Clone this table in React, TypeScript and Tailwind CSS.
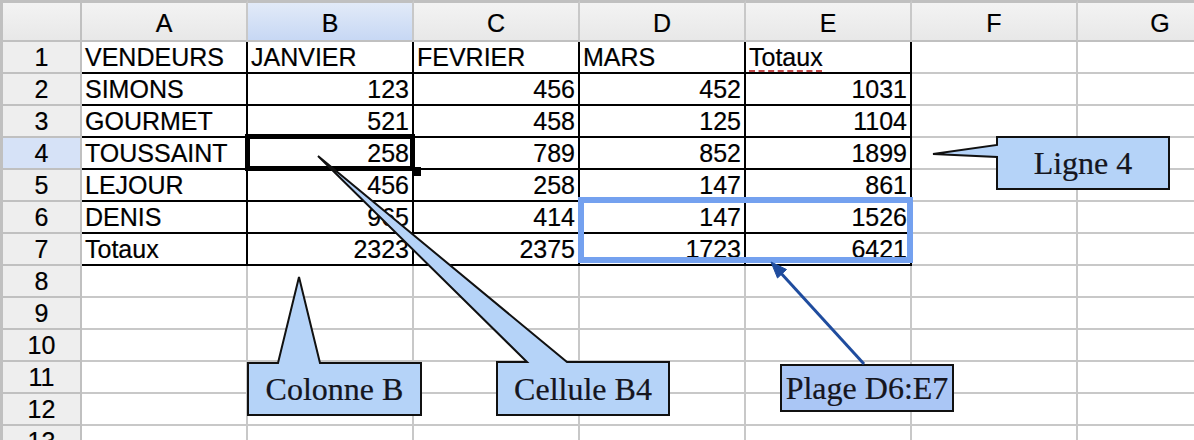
import React from 'react';

const COLS = ['A', 'B', 'C', 'D', 'E', 'F', 'G'];

type Cell = { v: string; num?: boolean; spell?: boolean };

const DATA: Cell[][] = [
  [{ v: 'VENDEURS' }, { v: 'JANVIER' }, { v: 'FEVRIER' }, { v: 'MARS' }, { v: 'Totaux', spell: true }],
  [{ v: 'SIMONS' }, { v: '123', num: true }, { v: '456', num: true }, { v: '452', num: true }, { v: '1031', num: true }],
  [{ v: 'GOURMET' }, { v: '521', num: true }, { v: '458', num: true }, { v: '125', num: true }, { v: '1104', num: true }],
  [{ v: 'TOUSSAINT' }, { v: '258', num: true }, { v: '789', num: true }, { v: '852', num: true }, { v: '1899', num: true }],
  [{ v: 'LEJOUR' }, { v: '456', num: true }, { v: '258', num: true }, { v: '147', num: true }, { v: '861', num: true }],
  [{ v: 'DENIS' }, { v: '965', num: true }, { v: '414', num: true }, { v: '147', num: true }, { v: '1526', num: true }],
  [{ v: 'Totaux' }, { v: '2323', num: true }, { v: '2375', num: true }, { v: '1723', num: true }, { v: '6421', num: true }],
];

const ROWS = Array.from({ length: 13 }, (_, i) => i + 1);

function DataCell({ row, col }: { row: number; col: number }) {
  const inTable = row <= 7 && col <= 4;
  const cell = inTable ? DATA[row - 1][col] : undefined;
  return (
    <div
      className={
        inTable
          ? 'w-[166px] h-[32px] shrink-0 border-r-2 border-b-2 border-black px-[3px] leading-[30px] whitespace-nowrap overflow-hidden'
          : 'w-[166px] h-[32px] shrink-0 border-r-2 border-b-2 border-[#c8c8c8] px-[3px] leading-[30px] whitespace-nowrap overflow-hidden'
      }
    >
      {cell ? (
        <div className={cell.num ? 'text-right' : 'text-left'}>
          {cell.spell ? (
            <span className="underline decoration-dashed decoration-[#c04848] decoration-2 underline-offset-[4px]">
              {cell.v}
            </span>
          ) : (
            cell.v
          )}
        </div>
      ) : null}
    </div>
  );
}

const SERIF = "font-['Liberation_Serif','Times_New_Roman',serif]";

export default function App() {
  return (
    <div className="relative w-[1194px] h-[440px] overflow-hidden bg-white text-black font-['Liberation_Sans',Arial,sans-serif] text-[25px] [-webkit-text-stroke:0.2px_#000]">
      {/* column header row */}
      <div className="flex h-[42px]">
        <div className="w-[82px] h-[42px] shrink-0 border-t-[3px] border-l-[3px] border-r-2 border-b-2 border-[#c0c0c0] bg-linear-to-b from-[#f3f3f3] to-[#e8e8e8]" />
        {COLS.map((c) => (
          <div
            key={c}
            className={
              c === 'B'
                ? 'w-[166px] h-[42px] shrink-0 border-t-[3px] border-r-2 border-b-2 border-t-[#c0c0c0] border-r-[#c8c8c8] border-b-[#c0c0c0] bg-linear-to-b from-[#e2eaf8] to-[#c7d8f4] flex items-center justify-center pt-[3px] leading-[30px]'
                : 'w-[166px] h-[42px] shrink-0 border-t-[3px] border-r-2 border-b-2 border-t-[#c0c0c0] border-r-[#c8c8c8] border-b-[#c0c0c0] bg-linear-to-b from-[#f3f3f3] to-[#e8e8e8] flex items-center justify-center pt-[3px] leading-[30px]'
            }
          >
            {c}
          </div>
        ))}
      </div>

      {/* data rows */}
      {ROWS.map((r) => (
        <div key={r} className="flex h-[32px]">
          <div
            className={
              r === 4
                ? 'w-[82px] h-[32px] shrink-0 border-l-[3px] border-r-2 border-b-2 border-[#c0c0c0] bg-[#d6e2f7] text-center leading-[30px]'
                : 'w-[82px] h-[32px] shrink-0 border-l-[3px] border-r-2 border-b-2 border-[#c0c0c0] bg-[#eeeeee] text-center leading-[30px]'
            }
          >
            {r}
          </div>
          {COLS.map((c, ci) => (
            <DataCell key={c} row={r} col={ci} />
          ))}
        </div>
      ))}

      {/* selected cell B4 */}
      <div className="absolute left-[245px] top-[134px] w-[170px] h-[37px] border-[5px] border-black" />
      <div className="absolute left-[412px] top-[167px] w-[9px] h-[9px] bg-black" />

      {/* range D6:E7 */}
      <div className="absolute left-[578px] top-[197px] w-[335px] h-[66px] border-[6px] border-[#74a1ef]" />

      {/* callouts */}
      <svg
        className="absolute left-0 top-0 pointer-events-none"
        width="1194"
        height="440"
        viewBox="0 0 1194 440"
      >
        <path
          d="M248,363 L278,363 L299,277 L320,363 L421,363 L421,415 L248,415 Z"
          fill="#b5d3f8"
          stroke="#111"
          strokeWidth="2"
        />
        <path
          d="M497,362 L527,362 L318,156 L567,362 L669,362 L669,415 L497,415 Z"
          fill="#b5d3f8"
          stroke="#111"
          strokeWidth="2"
        />
        <path
          d="M997,137 L1169,137 L1169,189 L997,189 L997,157 L933,154 L997,145 Z"
          fill="#b5d3f8"
          stroke="#111"
          strokeWidth="2"
        />
        <rect x="781" y="365" width="172" height="46" fill="#aac6f5" stroke="#111" strokeWidth="2" />
        <line x1="864" y1="364" x2="779" y2="271" stroke="#1f4c9e" strokeWidth="3" />
        <path d="M771,262 L786.5,269.5 L777.5,278 Z" fill="#1f4c9e" stroke="#1f4c9e" strokeWidth="1" />
      </svg>

      <div className={`absolute left-[248px] top-[363px] w-[173px] h-[52px] flex items-center justify-center leading-none text-[32px] text-[#16161f] ${SERIF}`}>
        Colonne B
      </div>
      <div className={`absolute left-[497px] top-[362px] w-[172px] h-[53px] flex items-center justify-center leading-none text-[32px] text-[#16161f] ${SERIF}`}>
        Cellule B4
      </div>
      <div className={`absolute left-[781px] top-[365px] w-[172px] h-[46px] flex items-center justify-center leading-none text-[32px] text-[#16161f] whitespace-nowrap ${SERIF}`}>
        Plage D6:E7
      </div>
      <div className={`absolute left-[997px] top-[137px] w-[172px] h-[52px] flex items-center justify-center leading-none text-[32px] text-[#16161f] ${SERIF}`}>
        Ligne 4
      </div>
    </div>
  );
}
